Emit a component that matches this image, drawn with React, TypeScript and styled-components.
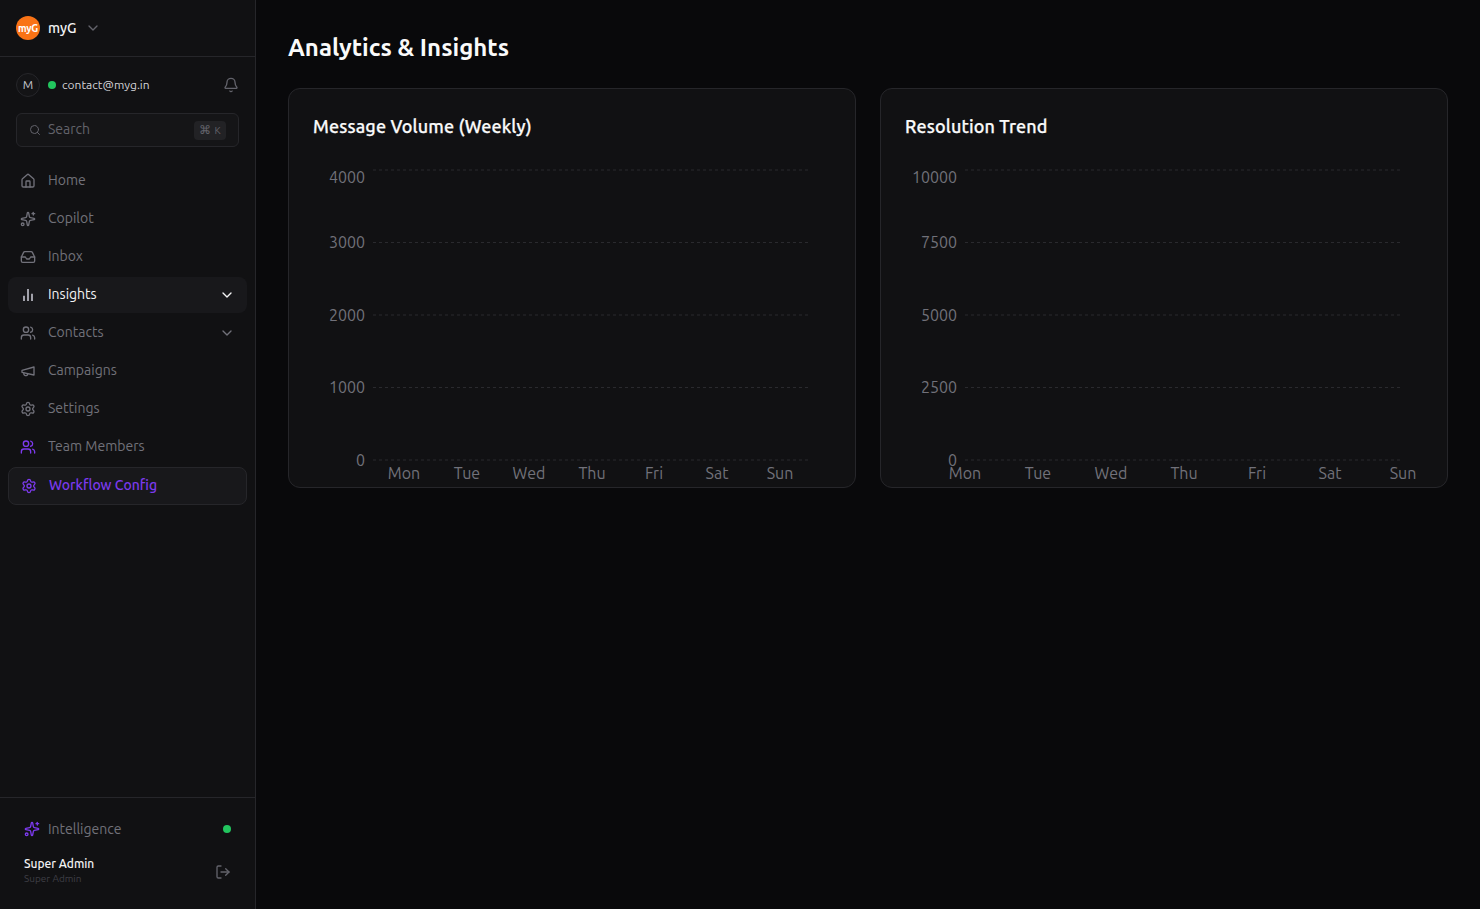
import React from "react";
import styled, { createGlobalStyle } from "styled-components";
import {
  Bell,
  ChevronDown,
  Home,
  Inbox,
  LogOut,
  Search,
  Settings,
  Sparkles,
  Users,
} from "lucide-react";

const GlobalStyle = createGlobalStyle`
  html, body, #root { height: 100%; }
  body {
    margin: 0;
    background: #09090b;
    font-family: "Ubuntu", "Noto Sans", "Open Sans", sans-serif;
  }
  * { box-sizing: border-box; }
`;

const Layout = styled.div`
  display: flex;
  height: 909px;
  overflow: hidden;
`;

const Sidebar = styled.aside`
  display: flex;
  flex-direction: column;
  width: 256px;
  flex-shrink: 0;
  background: #111113;
  border-right: 1px solid #26262a;
`;

const Brand = styled.div`
  display: flex;
  align-items: center;
  height: 57px;
  padding: 0 16px;
  border-bottom: 1px solid #26262a;
`;

const Logo = styled.div`
  width: 24px;
  height: 24px;
  display: flex;
  align-items: center;
  justify-content: center;
  border-radius: 50%;
  background: #f97316;
  color: #fff;
  font-size: 10px;
  font-weight: 700;
  letter-spacing: -0.3px;
`;

const BrandName = styled.span`
  margin-left: 8px;
  font-size: 14px;
  font-weight: 500;
  color: #f4f4f5;
`;

const BrandChevron = styled(ChevronDown)`
  margin-left: 8px;
  color: #63636b;
`;

const Account = styled.div`
  display: flex;
  align-items: center;
  height: 24px;
  margin: 16px 16px 0;
`;

const Avatar = styled.div`
  width: 24px;
  height: 24px;
  display: flex;
  align-items: center;
  justify-content: center;
  padding-bottom: 1px;
  border: 1px solid #26262a;
  border-radius: 50%;
  background: #141416;
  color: #c4c4cc;
  font-size: 12px;
  font-weight: 400;
`;

const Dot = styled.span`
  width: 8px;
  height: 8px;
  flex-shrink: 0;
  border-radius: 50%;
  background: #22c55e;
`;

const AccountDot = styled(Dot)`
  margin-left: 8px;
`;

const Email = styled.span`
  flex: 1;
  margin-left: 6px;
  padding-bottom: 2px;
  font-size: 12px;
  color: #d4d4d8;
`;

const BellIcon = styled(Bell)`
  color: #63636b;
`;

const SearchBox = styled.div`
  display: flex;
  align-items: center;
  height: 34px;
  margin: 16px 16px 0;
  padding: 0 12px;
  border: 1px solid #26262a;
  border-radius: 6px;
  background: #151517;
  color: #63636b;
`;

const SearchText = styled.span`
  flex: 1;
  margin-left: 7px;
  padding-bottom: 2px;
  font-size: 14px;
`;

const Kbd = styled.span`
  display: flex;
  align-items: center;
  justify-content: center;
  gap: 3px;
  width: 32px;
  height: 19px;
  border-radius: 4px;
  background: #222225;
  color: #63636b;
  font-size: 12px;
`;

const KbdKey = styled.span`
  font-size: 10px;
`;

const Nav = styled.nav`
  flex: 1;
  display: flex;
  flex-direction: column;
  gap: 2px;
  padding: 16px 8px 0;
`;

const NavItem = styled.div<{ $active?: boolean; $accent?: boolean }>`
  display: flex;
  align-items: center;
  gap: 12px;
  height: ${(p) => (p.$accent ? "38px" : "36px")};
  padding: 0 12px;
  border: ${(p) => (p.$accent ? "1px solid #26262a" : "none")};
  border-radius: 8px;
  background: ${(p) => (p.$active || p.$accent ? "#18181b" : "transparent")};
  color: ${(p) => (p.$accent ? "#7c3aed" : p.$active ? "#f4f4f5" : "#71717a")};
  font-size: 14px;
  font-weight: ${(p) => (p.$accent ? 500 : 400)};
`;

const NavLabel = styled.span`
  flex: 1;
  padding-bottom: 2px;
`;

const NavIcon = styled.span<{ $tone?: string }>`
  display: flex;
  color: ${(p) => p.$tone ?? "inherit"};
`;

const Footer = styled.div`
  height: 112px;
  padding: 15px 24px 0;
  border-top: 1px solid #26262a;
`;

const StatusRow = styled.div`
  display: flex;
  align-items: center;
  gap: 8px;
  height: 32px;
  color: #71717a;
  font-size: 14px;
`;

const StatusLabel = styled.span`
  flex: 1;
`;

const UserRow = styled.div`
  display: flex;
  align-items: center;
  justify-content: space-between;
  margin-top: 11px;
  color: #63636b;
`;

const ExitIcon = styled(LogOut)`
  margin-top: 2px;
`;

const UserName = styled.div`
  color: #f4f4f5;
  font-size: 12px;
  font-weight: 500;
  line-height: 16px;
`;

const UserRole = styled.div`
  color: #3f3f46;
  font-size: 10px;
  line-height: 14px;
`;

const Main = styled.main`
  flex: 1;
  padding: 32px;
`;

const Title = styled.h1`
  margin: 0 0 24px;
  color: #fafafa;
  font-size: 24px;
  font-weight: 700;
  line-height: 32px;
`;

const ChartGrid = styled.div`
  display: grid;
  grid-template-columns: 1fr 1fr;
  gap: 24px;
`;

const Card = styled.section`
  height: 400px;
  padding: 23px 24px 24px;
  border: 1px solid #26262a;
  border-radius: 12px;
  background: #111113;
`;

const CardTitle = styled.h2`
  margin: 0;
  color: #fafafa;
  font-size: 18px;
  font-weight: 500;
  letter-spacing: 0.13px;
  line-height: 28px;
  -webkit-text-stroke: 0.25px #fafafa;
`;

const Plot = styled.svg`
  display: block;
  margin-top: 3px;
  overflow: visible;
`;

const AxisText = styled.text`
  fill: #71717a;
  font-size: 16px;
  dominant-baseline: central;
`;

const DAYS = ["Mon", "Tue", "Wed", "Thu", "Fri", "Sat", "Sun"];

const GRID_Y = [27, 99.5, 172, 244.5, 317];
const LABEL_Y = [34, 99, 172, 244, 317];

// same outline as the sidebar campaign icon, lucide's current megaphone has a different shape
const CampaignIcon = () => (
  <svg
    width={16}
    height={16}
    viewBox="0 0 24 24"
    fill="none"
    stroke="currentColor"
    strokeWidth={2}
    strokeLinecap="round"
    strokeLinejoin="round"
  >
    <path d="m3 11 18-5v12L3 14v-3z" />
    <path d="M11.6 16.8a3 3 0 1 1-5.8-1.6" />
  </svg>
);

const InsightsIcon = () => (
  <svg
    width={16}
    height={16}
    viewBox="0 0 24 24"
    fill="none"
    stroke="currentColor"
    strokeWidth={3}
  >
    <path d="M18 21V10" />
    <path d="M12 21V3" />
    <path d="M6 21v-8" />
  </svg>
);

// plot coordinates are relative to the svg, which starts below the card title
const Chart = ({
  ticks,
  dayX,
}: {
  ticks: string[];
  dayX: number[];
}) => (
  <Plot width={518} height={320} viewBox="0 0 518 320">
    {GRID_Y.map((y) => (
      <line
        key={y}
        x1={60}
        x2={495}
        y1={y}
        y2={y}
        stroke="#2a2a2e"
        strokeDasharray="3 3"
      />
    ))}
    {ticks.map((t, i) => (
      <AxisText key={t} x={52} y={LABEL_Y[i]} textAnchor="end">
        {t}
      </AxisText>
    ))}
    {DAYS.map((d, i) => (
      <AxisText key={d} x={dayX[i]} y={330} textAnchor="middle">
        {d}
      </AxisText>
    ))}
  </Plot>
);

const items = [
  { label: "Home", icon: Home },
  { label: "Copilot", icon: Sparkles },
  { label: "Inbox", icon: Inbox },
  { label: "Insights", icon: InsightsIcon, active: true, chevron: true },
  { label: "Contacts", icon: Users, chevron: true },
  { label: "Campaigns", icon: CampaignIcon },
  { label: "Settings", icon: Settings },
  { label: "Team Members", icon: Users, tone: "#7c3aed" },
];

const App = () => (
  <Layout>
    <GlobalStyle />
    <Sidebar>
      <Brand>
        <Logo>myG</Logo>
        <BrandName>myG</BrandName>
        <BrandChevron size={16} />
      </Brand>
      <Account>
        <Avatar>M</Avatar>
        <AccountDot />
        <Email>contact@myg.in</Email>
        <BellIcon size={16} />
      </Account>
      <SearchBox>
        <Search size={12} />
        <SearchText>Search</SearchText>
        <Kbd>
          ⌘<KbdKey>K</KbdKey>
        </Kbd>
      </SearchBox>
      <Nav>
        {items.map(({ label, icon: Icon, active, chevron, tone }) => (
          <NavItem key={label} $active={active}>
            <NavIcon $tone={tone ?? (active ? "#a1a1aa" : undefined)}>
              <Icon size={16} />
            </NavIcon>
            <NavLabel>{label}</NavLabel>
            {chevron && <ChevronDown size={16} />}
          </NavItem>
        ))}
        <NavItem $accent>
          <Settings size={16} />
          <NavLabel>Workflow Config</NavLabel>
        </NavItem>
      </Nav>
      <Footer>
        <StatusRow>
          <NavIcon $tone="#7c3aed">
            <Sparkles size={16} />
          </NavIcon>
          <StatusLabel>Intelligence</StatusLabel>
          <Dot />
        </StatusRow>
        <UserRow>
          <div>
            <UserName>Super Admin</UserName>
            <UserRole>Super Admin</UserRole>
          </div>
          <ExitIcon size={16} />
        </UserRow>
      </Footer>
    </Sidebar>
    <Main>
      <Title>Analytics &amp; Insights</Title>
      <ChartGrid>
        <Card>
          <CardTitle>Message Volume (Weekly)</CardTitle>
          <Chart
            ticks={["4000", "3000", "2000", "1000", "0"]}
            dayX={[91, 154, 216, 279, 341, 404, 467]}
          />
        </Card>
        <Card>
          <CardTitle>Resolution Trend</CardTitle>
          <Chart
            ticks={["10000", "7500", "5000", "2500", "0"]}
            dayX={[60, 133, 206, 279, 352, 425, 498]}
          />
        </Card>
      </ChartGrid>
    </Main>
  </Layout>
);

export default App;
